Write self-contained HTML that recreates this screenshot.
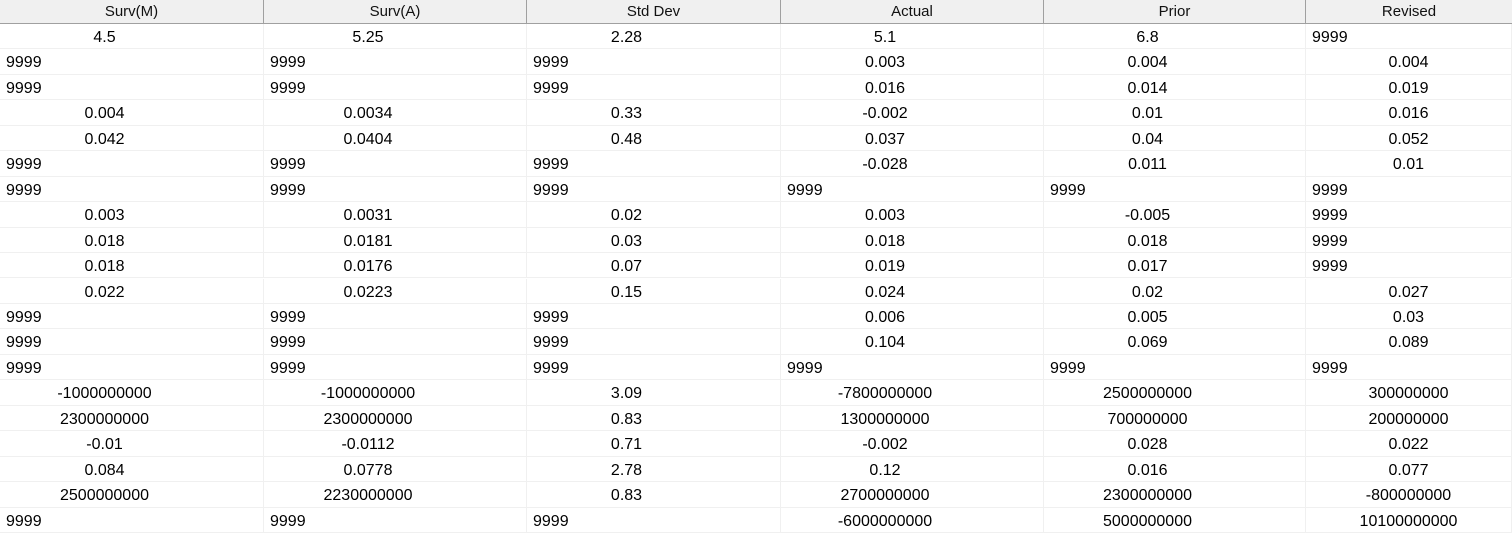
<!DOCTYPE html>
<html><head><style>
body{margin:0;width:1512px;height:533px;overflow:hidden;background:#fff;font-family:"Liberation Sans",sans-serif;font-size:16px;color:#000}
.h{position:absolute;top:0;height:24px;background:#f0f0f0;border-bottom:1px solid #a0a0a0;border-right:1px solid #a0a0a0;box-sizing:border-box;text-align:center;line-height:24px;font-size:15px;color:#111}
.r{position:absolute;left:0;width:1512px;height:25.45px;border-bottom:1px solid #f0f0f0;box-sizing:border-box}
.c{position:absolute;top:0;height:100%;line-height:28px;border-right:1px solid #f0f0f0;box-sizing:border-box;white-space:nowrap}
.m{text-align:center;padding-right:54px}
.l{text-align:left;padding-left:6px}
.c6.m{padding-right:0}
</style></head><body>
<div class="h" style="left:0;width:264px">Surv(M)</div>
<div class="h" style="left:264px;width:263px">Surv(A)</div>
<div class="h" style="left:527px;width:254px">Std Dev</div>
<div class="h" style="left:781px;width:263px">Actual</div>
<div class="h" style="left:1044px;width:262px">Prior</div>
<div class="h" style="left:1306px;width:206px;border-right:none">Revised</div>
<div id="g"></div>
<script>
var d=[
["4.5","5.25","2.28","5.1","6.8","L9999"],
["L9999","L9999","L9999","0.003","0.004","0.004"],
["L9999","L9999","L9999","0.016","0.014","0.019"],
["0.004","0.0034","0.33","-0.002","0.01","0.016"],
["0.042","0.0404","0.48","0.037","0.04","0.052"],
["L9999","L9999","L9999","-0.028","0.011","0.01"],
["L9999","L9999","L9999","L9999","L9999","L9999"],
["0.003","0.0031","0.02","0.003","-0.005","L9999"],
["0.018","0.0181","0.03","0.018","0.018","L9999"],
["0.018","0.0176","0.07","0.019","0.017","L9999"],
["0.022","0.0223","0.15","0.024","0.02","0.027"],
["L9999","L9999","L9999","0.006","0.005","0.03"],
["L9999","L9999","L9999","0.104","0.069","0.089"],
["L9999","L9999","L9999","L9999","L9999","L9999"],
["-1000000000","-1000000000","3.09","-7800000000","2500000000","300000000"],
["2300000000","2300000000","0.83","1300000000","700000000","200000000"],
["-0.01","-0.0112","0.71","-0.002","0.028","0.022"],
["0.084","0.0778","2.78","0.12","0.016","0.077"],
["2500000000","2230000000","0.83","2700000000","2300000000","-800000000"],
["L9999","L9999","L9999","-6000000000","5000000000","10100000000"]];
var L=[0,264,527,781,1044,1306],W=[264,263,254,263,262,206],h="";
d.forEach(function(r,i){h+='<div class="r" style="top:'+(24+i*25.45)+'px">';
r.forEach(function(v,j){var l=v[0]=="L";h+='<div class="c c'+(j+1)+' '+(l?'l':'m')+'" style="left:'+L[j]+'px;width:'+W[j]+'px">'+(l?v.slice(1):v)+'</div>';});h+='</div>';});
document.getElementById("g").innerHTML=h;
</script>
</body></html>
